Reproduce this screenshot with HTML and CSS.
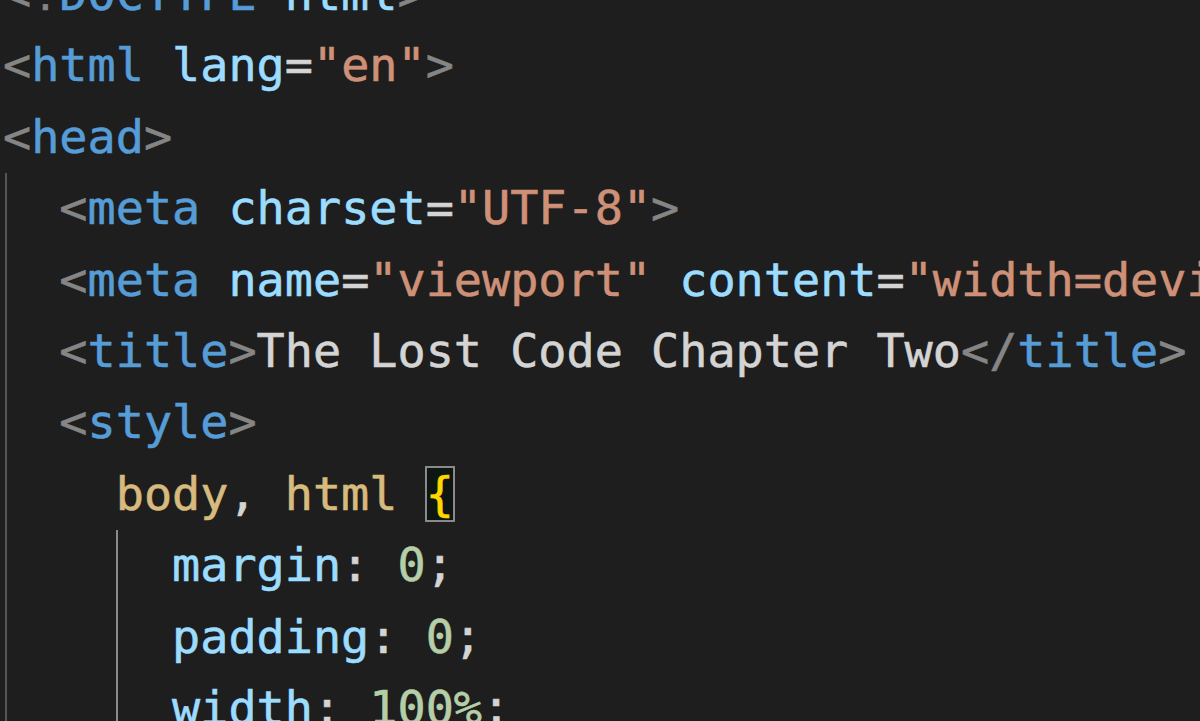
FILE: index.html
```html
<!DOCTYPE html>
<html lang="en">
<head>
<meta charset="UTF-8">
<title>Editor</title>
<link rel="stylesheet" href="styles.css">
</head>
<body>
<div class="editor">
  <div class="code">
    <div class="line"><span class="p">&lt;!</span><span class="t">DOCTYPE</span> <span class="a">html</span><span class="p">&gt;</span></div>
    <div class="line"><span class="p">&lt;</span><span class="t">html</span> <span class="a">lang</span><span class="x">=</span><span class="s">"en"</span><span class="p">&gt;</span></div>
    <div class="line"><span class="p">&lt;</span><span class="t">head</span><span class="p">&gt;</span></div>
    <div class="line">  <span class="p">&lt;</span><span class="t">meta</span> <span class="a">charset</span><span class="x">=</span><span class="s">"UTF-8"</span><span class="p">&gt;</span></div>
    <div class="line">  <span class="p">&lt;</span><span class="t">meta</span> <span class="a">name</span><span class="x">=</span><span class="s">"viewport"</span> <span class="a">content</span><span class="x">=</span><span class="s">"width=device-width, initial-scale=1.0"</span><span class="p">&gt;</span></div>
    <div class="line">  <span class="p">&lt;</span><span class="t">title</span><span class="p">&gt;</span><span class="x">The Lost Code Chapter Two</span><span class="p">&lt;/</span><span class="t">title</span><span class="p">&gt;</span></div>
    <div class="line">  <span class="p">&lt;</span><span class="t">style</span><span class="p">&gt;</span></div>
    <div class="line">    <span class="sel">body</span><span class="x">, </span><span class="sel">html</span> <span class="brace">{</span></div>
    <div class="line">      <span class="a">margin</span><span class="x">: </span><span class="n">0</span><span class="x">;</span></div>
    <div class="line">      <span class="a">padding</span><span class="x">: </span><span class="n">0</span><span class="x">;</span></div>
    <div class="line">      <span class="a">width</span><span class="x">: </span><span class="n">100%</span><span class="x">;</span></div>
  </div>
  <div class="guide guide-head"></div>
  <div class="guide guide-body"></div>
</div>
</body>
</html>
```

FILE: styles.css
```css
html, body {
  margin: 0;
  padding: 0;
  background: #1e1e1e;
}

.editor {
  position: relative;
  width: 1200px;
  height: 721px;
  overflow: hidden;
  background: #1e1e1e;
}

.code {
  margin-top: -41px;
  padding-left: 3px;
  font-family: "DejaVu Sans Mono", "Liberation Mono", monospace;
  font-size: 46.8px;
  font-feature-settings: "zero" 1;
  -webkit-text-stroke: 0.6px currentColor;
  color: #d4d4d4;
}

.line {
  height: 71.4px;
  line-height: 71.4px;
  white-space: pre;
}

.p { color: #858585; }
.t { color: #569cd6; }
.a { color: #9cdcfe; }
.s { color: #ce9178; }
.x { color: #d4d4d4; }
.n { color: #b5cea8; }
.sel { color: #d7ba7d; }

.brace {
  color: #ffd700;
  outline: 2px solid #8a8a8a;
  outline-offset: -1px;
  background: #0e1612;
}

.guide {
  position: absolute;
  width: 2px;
  bottom: 0;
}

.guide-head {
  left: 5px;
  top: 173px;
  background: #555555;
}

.guide-body {
  left: 116px;
  top: 530px;
  background: #8a8a8a;
}
```
